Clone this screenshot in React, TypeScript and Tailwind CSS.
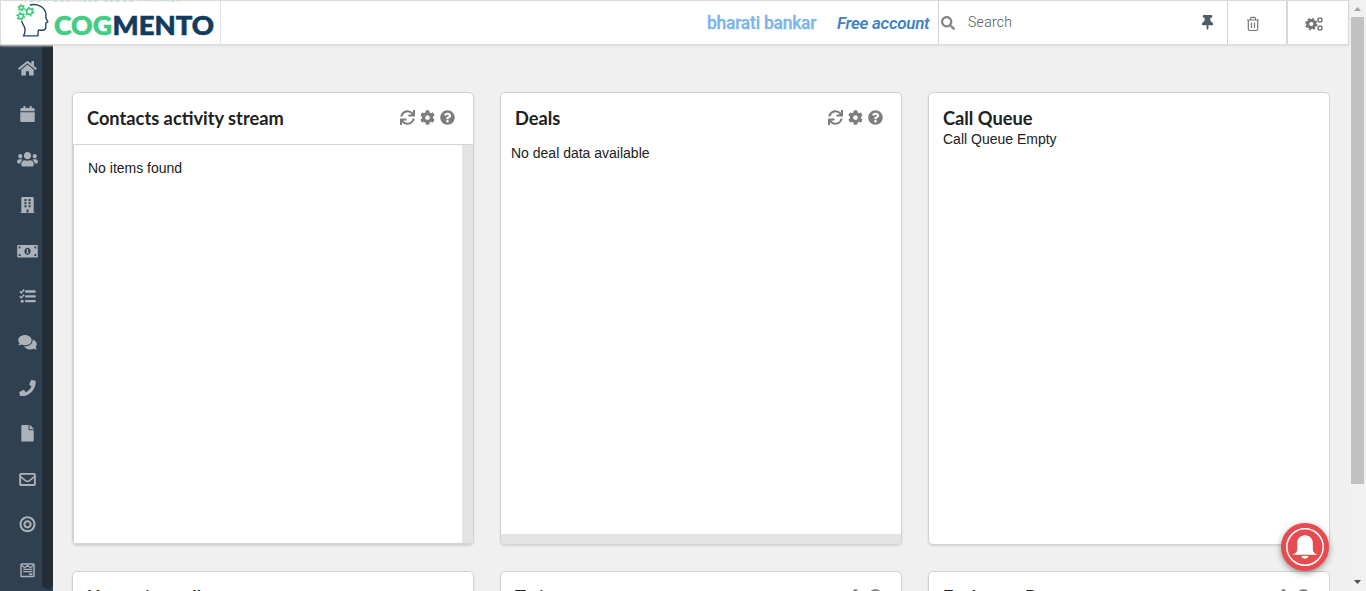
import React from "react";
import {
  FaHome, FaCalendar, FaUsers, FaBuilding, FaMoneyBillAlt, FaComments, FaPhone, FaFile,
  FaBullseye, FaSync, FaCog, FaQuestionCircle, FaThumbtack, FaSearch,
} from "react-icons/fa";

type IconProps = { className?: string };

function MailIcon({ className }: IconProps) {
  return (
    <svg viewBox="0 0 21 17" className={className} fill="none" stroke="currentColor" strokeWidth="1.9">
      <rect x="2.9" y="3" width="15.2" height="11.4" rx="0.8" />
      <path d="M3 5.6l5.8 4.6q1.7 1.3 3.4 0L18 5.6" strokeWidth="1.6" />
    </svg>
  );
}

function TasksIcon({ className }: IconProps) {
  return (
    <svg viewBox="0 0 21 17" className={className} fill="none" stroke="currentColor">
      <path d="M9 3.6h9M9 8.6h9M9 13.6h9" strokeWidth="2.4" strokeLinecap="round" />
      <path d="M2.6 3.6l1.5 1.4 3-3.4M2.6 8.6l1.500 1.400 3-3.400" strokeWidth="1.500" />
      <circle cx="5" cy="13.600" r="1.600" fill="currentColor" stroke="none" />
    </svg>
  );
}

function FormIcon({ className }: IconProps) {
  return (
    <svg viewBox="0 0 21 17" className={className} fill="none" stroke="currentColor" strokeWidth="1.5">
      <rect x="3.8" y="2" width="13.4" height="13" rx="0.8" />
      <path d="M4.5 3.4l3 2.4 3-2.4 3 2.4 3-2.4" strokeWidth="1.2" />
      <path d="M6 7.5h9.5M6 10h9.5" strokeWidth="1.3" />
      <path d="M12 12.6h3.6" strokeWidth="1.8" />
    </svg>
  );
}

const nav = [FaHome, FaCalendar, FaUsers, FaBuilding, FaMoneyBillAlt, TasksIcon, FaComments, FaPhone, FaFile, MailIcon, FaBullseye, FormIcon];

function Gear({ cx, cy, r }: { cx: number; cy: number; r: number }) {
  return (
    <g fill="none" stroke="#43cc83">
      <circle cx={cx} cy={cy} r={r} strokeWidth="1.7" />
      <circle cx={cx} cy={cy} r={r + 1.3} strokeWidth="1.5" strokeDasharray={`${(r + 1.3) * 0.45} ${(r + 1.3) * 0.597}`} />
    </g>
  );
}

function Logo() {
  return (
    <svg width="219" height="43" viewBox="1 1 219 43" className="block">
      <text x="23" y="1.9" textLength="158" fontFamily="Lato" fontSize="7" fill="#a5ddc0">YOUR BUSINESS CLOUD PARTNER</text>
      <path d="M29.8 5C37 3.4 45 6.6 46 14c.1 2.5-.6 3.3.2 4.6l1.6 3.4-2 1.2v4.3c-.2 2-2 2.9-4 2.7l-3.4-.1-.6 5.8H23.6c2-4.2 2-8.1-.6-11.5l-1.4-3.4" fill="none" stroke="#274866" strokeWidth="1.4" />
      <Gear cx={29.5} cy={11.5} r={2.9} />
      <Gear cx={21.3} cy={7.8} r={1.9} />
      <Gear cx={20.8} cy={16.3} r={2.5} />
      <g fontFamily="Lato" fontWeight="900" fontSize="26" strokeWidth=".6">
        <text x="54" y="35" textLength="58" lengthAdjust="spacingAndGlyphs" fill="#43cc83" stroke="#43cc83">COG</text>
        <text x="112.5" y="35" textLength="101.5" lengthAdjust="spacingAndGlyphs" fill="#123b5d" stroke="#123b5d">MENTO</text>
      </g>
    </svg>
  );
}

function Tools({ refresh }: { refresh: boolean }) {
  return (
    <div className="mr-[18.5px] flex gap-[5px] pt-[16.5px] text-[15px] text-[#7d7d7d]">
      {refresh && <FaSync />}<FaCog /><FaQuestionCircle />
    </div>
  );
}

type CardProps = { title: string; tools?: boolean; refresh?: boolean; children?: React.ReactNode };

function Card({ title, tools = true, refresh = true, children }: CardProps) {
  return (
    <section className="flex h-[453px] w-[402px] shrink-0 flex-col overflow-hidden rounded-[5px] border border-[#d2d2d3] bg-white shadow-[0_1px_2px_#d4d4d5]">
      <header className="flex h-[38px] shrink-0 justify-between">
        <h2 className="pl-[14px] pt-[12px] font-[Lato] text-[18.25px] font-bold leading-[26px] text-[#212121]">{title}</h2>
        {tools && <Tools refresh={refresh} />}
      </header>
      {children}
    </section>
  );
}

export default function App() {
  return (
    <div className="flex h-[591px] w-[1366px] overflow-hidden bg-[#f0f0f0] font-['Liberation_Sans',sans-serif] text-[14px] text-[#212121]">
      <div className="flex w-[1349px] flex-col">
        <header className="z-10 flex h-[45px] shrink-0 border border-[#dadada] bg-white shadow-[0_1px_2px_#ddd]">
          <div className="w-[220px] shrink-0 overflow-hidden border-r border-[#e4e4e4]"><Logo /></div>
          <div className="flex grow items-start justify-end pr-[8px] pt-[10px] font-[Roboto] leading-[24px]">
            <span className="mr-[19px] w-[111px] whitespace-nowrap text-[17.5px] font-medium tracking-[-0.25px] text-[#7cb5ec] [-webkit-text-stroke:0.3px_#7cb5ec]">bharati bankar</span>
            <span className="w-[93px] whitespace-nowrap text-[17px] font-semibold italic tracking-[-0.3px] text-[#4183c4]">Free account</span>
          </div>
          <div className="flex w-[290px] shrink-0 items-center border-x border-[#d4d4d5] pl-[2px]">
            <FaSearch className="text-[14px] text-[#868686]" />
            <span className="ml-[13px] grow font-[Roboto] text-[14px] font-light tracking-[0.3px] text-[#555]">Search</span>
            <FaThumbtack className="mr-[12px] text-[15px] text-[#4f5d6b]" />
          </div>
          <div className="flex w-[60px] shrink-0 items-center border-r-2 border-[#d8d8d8] pl-[18px] pt-[3px]">
            <svg width="14" height="16" viewBox="0 0 14 16" fill="none" stroke="#777" strokeWidth="1.2">
              <path d="M1 4h12M4.5 3.8V2.5q0-1.2 1.2-1.2h2.6q1.2 0 1.2 1.2v1.3M2.3 4v9q0 1.5 1.4 1.5h6.6q1.4 0 1.4-1.5V4M5.5 6.5v5.6M8.5 6.5v5.6" />
            </svg>
          </div>
          <div className="flex w-[60px] shrink-0 items-center pl-[17px] pt-[2px]">
            <svg width="19" height="14" viewBox="0 0 19 14" fill="none" stroke="#757575">
              <circle cx="6.3" cy="7" r="3.6" strokeWidth="3" />
              <circle cx="6.3" cy="7" r="5.3" strokeWidth="1.7" strokeDasharray="2.2 1.96" />
              <circle cx="15" cy="3" r="2" strokeWidth="1.5" />
              <circle cx="15" cy="11" r="2" strokeWidth="1.5" />
            </svg>
          </div>
        </header>
        <div className="flex min-h-0 grow">
          <nav className="flex w-[53px] shrink-0 bg-[#2f4050]">
            <div className="flex w-[42px] flex-col pt-[0.5px]">
              {nav.map((Icon, i) => (
                <div key={i} className="flex h-[45.65px] shrink-0 items-center pl-[17px]">
                  <Icon className="h-[16.5px] w-[21px] shrink-0 text-[#abb2b9]" />
                </div>
              ))}
            </div>
            <div className="mb-[2px] w-[10.5px] rounded-b-[5px] bg-[#222d37]" />
          </nav>
          <main className="grid grid-cols-[402px_402px_402px] content-start gap-x-[26px] gap-y-[26px] overflow-hidden pl-[19px] pt-[47px]">
            <Card title="Contacts activity stream">
              <div className="mt-[13px] flex grow border-b border-l border-t border-[#d4d4d5]">
                <p className="grow pl-[14px] pt-[13px] leading-[20px]">No items found</p>
                <div className="w-[11px] bg-[#e3e3e3]" />
              </div>
            </Card>
            <Card title="Deals">
              <p className="grow pl-[10px] pt-[12px] leading-[20px]">No deal data available</p>
              <div className="h-[10px] bg-[#e3e3e3]" />
            </Card>
            <Card title="Call Queue" tools={false}>
              <p className="-mt-[2px] pl-[14px] leading-[20px]">Call Queue Empty</p>
            </Card>
            <Card title="Upcoming calls" tools={false} />
            <Card title="Twitter" refresh={false} />
            <Card title="Exchange Rates" refresh={false} />
          </main>
        </div>
      </div>
      <div className="flex w-[17px] flex-col items-center justify-between bg-[#f1f1f1]">
        <svg width="17" height="17" viewBox="0 0 17 17"><path d="M5 11h7L8.5 7z" fill="#a3a3a3" /></svg>
        <div className="h-[467px] w-[13px] bg-[#c1c1c1]" />
        <div className="grow" />
        <svg width="17" height="17" viewBox="0 0 17 17"><path d="M5 6h7l-3.5 4z" fill="#505050" /></svg>
      </div>
      <button className="absolute left-[1281px] top-[523px] z-20 flex size-[48px] items-center justify-center rounded-full bg-[#e64b4f] shadow-[0_2px_6px_rgba(0,0,0,.4)]">
        <svg width="38" height="38" viewBox="0 0 38 38" fill="white">
          <circle cx="19" cy="19" r="18.2" fill="none" stroke="white" strokeWidth="1.5" />
          <path d="M7.2 26.3q4-1 4-6V15c0-4.5 2.6-6.4 5.6-7.2q2.2-1.6 4.4 0c3 .8 5.6 2.7 5.6 7.2v5.3q0 5 4 6v.5H7.2zM15.5 28h7q-.8 2.8-3.5 2.8T15.5 28z" />
        </svg>
      </button>
    </div>
  );
}
